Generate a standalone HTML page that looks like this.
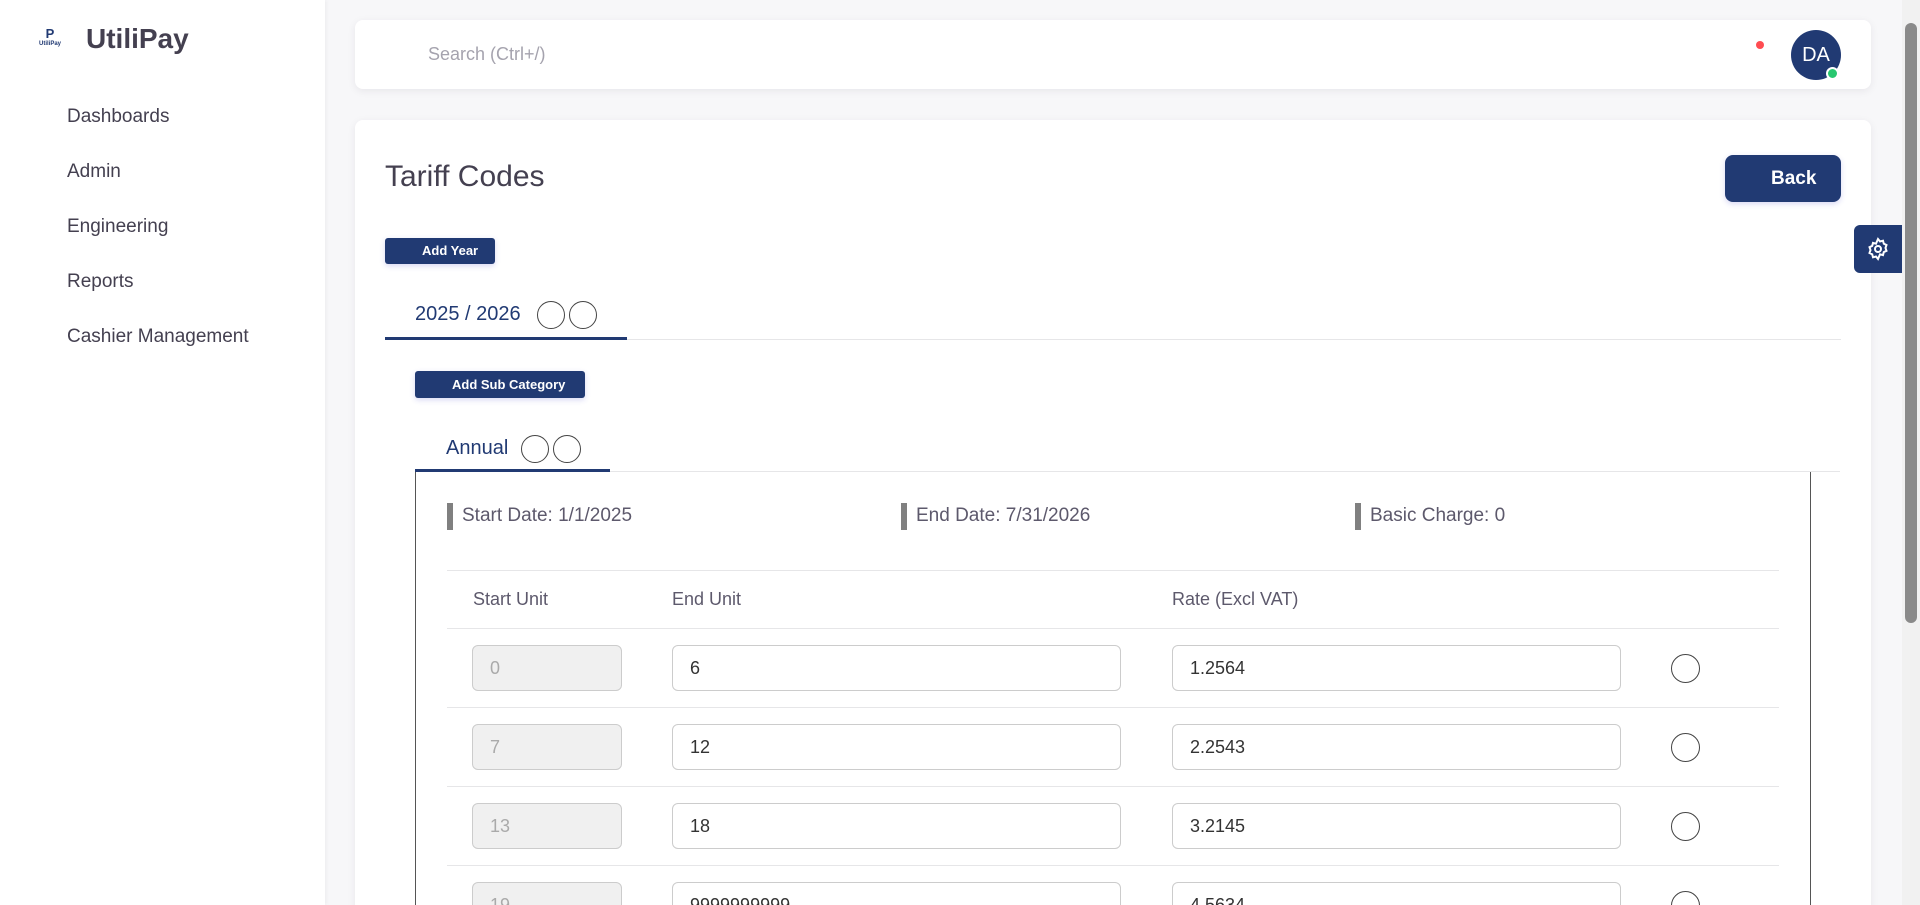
<!DOCTYPE html>
<html style="overflow:hidden"><head><meta charset="utf-8"><style>
*{box-sizing:border-box;margin:0;padding:0}
html,body{width:1920px;height:905px;overflow:hidden}
body{background:#f7f7f9;font-family:"Liberation Sans",sans-serif;color:#5d596c}
#w{position:relative;width:1920px;height:905px;overflow:hidden}
.a{position:absolute}
.side{left:0;top:0;width:325px;height:905px;background:#fff;box-shadow:1px 0 4px rgba(0,0,0,.05)}
.nav{left:67px;font-size:19px;color:#444050}
.card{background:#fff;border-radius:8px;box-shadow:0 2px 8px rgba(47,43,61,.08)}
.btn{background:#213a73;color:#fff;font-weight:bold;border-radius:3px;box-shadow:0 2px 6px rgba(60,60,200,.2)}
.circ{border:1.5px solid #444;border-radius:50%;background:#fff}
.inp{border:1px solid #ccc;border-radius:6px;height:46px;font-size:18px;color:#333;padding-left:17px;line-height:44px;background:#fff}
.dis{background:#f0f0f0;color:#aaa}
.hl{height:1px;background:#e6e6e8}
.inf{font-size:19px}
</style></head><body><div id="w">
<div class="a side"></div>
<div class="a" style="left:38px;top:28px;width:24px;height:24px;color:#213a73;font-weight:bold;font-size:13px;line-height:12px;text-align:center">P<div style="font-size:6px;line-height:8px">UtiliPay</div></div>
<div class="a" style="left:86px;top:23px;font-size:28px;font-weight:bold;color:#444050">UtiliPay</div>
<div class="a nav" style="top:106px">Dashboards</div>
<div class="a nav" style="top:161px">Admin</div>
<div class="a nav" style="top:216px">Engineering</div>
<div class="a nav" style="top:271px">Reports</div>
<div class="a nav" style="top:326px">Cashier Management</div>

<div class="a card" style="left:355px;top:20px;width:1516px;height:69px"></div>
<div class="a" style="left:428px;top:44px;font-size:18px;color:#a5a3ae">Search (Ctrl+/)</div>
<div class="a" style="left:1756px;top:41px;width:8px;height:8px;border-radius:50%;background:#ff4c51"></div>
<div class="a" style="left:1791px;top:30px;width:50px;height:50px;border-radius:50%;background:#213a73;color:#fff;font-size:20px;text-align:center;line-height:50px">DA</div>
<div class="a" style="left:1826px;top:67px;width:13px;height:13px;border-radius:50%;background:#28c76f;border:2px solid #fff"></div>

<div class="a card" style="left:355px;top:120px;width:1516px;height:800px"></div>
<div class="a" style="left:385px;top:160px;font-size:30px;color:#444050">Tariff Codes</div>
<div class="a btn" style="left:1725px;top:155px;width:116px;height:47px;border-radius:8px;font-size:19px;line-height:47px;padding-left:46px">Back</div>
<div class="a" style="left:1854px;top:225px;width:48px;height:48px;background:#213a73;border-radius:6px 0 0 6px"><svg width="48" height="48" viewBox="0 0 24 24" style="padding:12px" fill="none" stroke="#fff" stroke-width="2"><circle cx="12" cy="12" r="3"/><path d="M12 2l2 2.5 3-.8.8 3 2.7 1.3-1 2.9 1 2.9-2.7 1.3-.8 3-3-.8L12 22l-2-2.5-3 .8-.8-3-2.7-1.3 1-2.9-1-2.9 2.7-1.3.8-3 3 .8z"/></svg></div>
<div class="a" style="left:1902px;top:0;width:18px;height:905px;background:#f1f1f1"></div>
<div class="a" style="left:1905px;top:23px;width:12px;height:600px;background:#8a8a8a;border-radius:6px"></div>

<div class="a btn" style="left:385px;top:238px;width:110px;height:26px;font-size:13px;line-height:26px;padding-left:37px">Add Year</div>
<div class="a" style="left:415px;top:303px;font-size:20px;color:#213a73">2025 / 2026</div>
<div class="a circ" style="left:537px;top:301px;width:28px;height:28px"></div>
<div class="a circ" style="left:569px;top:301px;width:28px;height:28px"></div>
<div class="a hl" style="left:385px;top:339px;width:1456px"></div>
<div class="a" style="left:385px;top:337px;width:242px;height:3px;background:#213a73"></div>

<div class="a btn" style="left:415px;top:371px;width:170px;height:27px;font-size:13px;line-height:27px;padding-left:37px">Add Sub Category</div>
<div class="a" style="left:446px;top:437px;font-size:20px;color:#213a73">Annual</div>
<div class="a circ" style="left:521px;top:435px;width:28px;height:28px"></div>
<div class="a circ" style="left:553px;top:435px;width:28px;height:28px"></div>
<div class="a" style="left:415px;top:469px;width:195px;height:3px;background:#213a73"></div>
<div class="a hl" style="left:610px;top:471px;width:1230px"></div>
<div class="a" style="left:415px;top:472px;width:1396px;height:460px;border:1.5px solid #555;border-top:none"></div>

<div class="a" style="left:447px;top:503px;width:6px;height:27px;background:#808080"></div>
<div class="a inf" style="left:462px;top:505px">Start Date: 1/1/2025</div>
<div class="a" style="left:901px;top:503px;width:6px;height:27px;background:#808080"></div>
<div class="a inf" style="left:916px;top:505px">End Date: 7/31/2026</div>
<div class="a" style="left:1355px;top:503px;width:6px;height:27px;background:#808080"></div>
<div class="a inf" style="left:1370px;top:505px">Basic Charge: 0</div>

<div class="a hl" style="left:447px;top:570px;width:1332px"></div>
<div class="a" style="left:473px;top:589px;font-size:18px">Start Unit</div>
<div class="a" style="left:672px;top:589px;font-size:18px">End Unit</div>
<div class="a" style="left:1172px;top:589px;font-size:18px">Rate (Excl VAT)</div>
<div class="a hl" style="left:447px;top:628px;width:1332px"></div>

<div class="a inp dis" style="left:472px;top:645px;width:150px">0</div>
<div class="a inp" style="left:672px;top:645px;width:449px">6</div>
<div class="a inp" style="left:1172px;top:645px;width:449px">1.2564</div>
<div class="a circ" style="left:1671px;top:654px;width:29px;height:29px"></div>
<div class="a hl" style="left:447px;top:707px;width:1332px"></div>

<div class="a inp dis" style="left:472px;top:724px;width:150px">7</div>
<div class="a inp" style="left:672px;top:724px;width:449px">12</div>
<div class="a inp" style="left:1172px;top:724px;width:449px">2.2543</div>
<div class="a circ" style="left:1671px;top:733px;width:29px;height:29px"></div>
<div class="a hl" style="left:447px;top:786px;width:1332px"></div>

<div class="a inp dis" style="left:472px;top:803px;width:150px">13</div>
<div class="a inp" style="left:672px;top:803px;width:449px">18</div>
<div class="a inp" style="left:1172px;top:803px;width:449px">3.2145</div>
<div class="a circ" style="left:1671px;top:812px;width:29px;height:29px"></div>
<div class="a hl" style="left:447px;top:865px;width:1332px"></div>

<div class="a inp dis" style="left:472px;top:882px;width:150px">19</div>
<div class="a inp" style="left:672px;top:882px;width:449px">9999999999</div>
<div class="a inp" style="left:1172px;top:882px;width:449px">4.5634</div>
<div class="a circ" style="left:1671px;top:891px;width:29px;height:29px"></div>
</div></body></html>
